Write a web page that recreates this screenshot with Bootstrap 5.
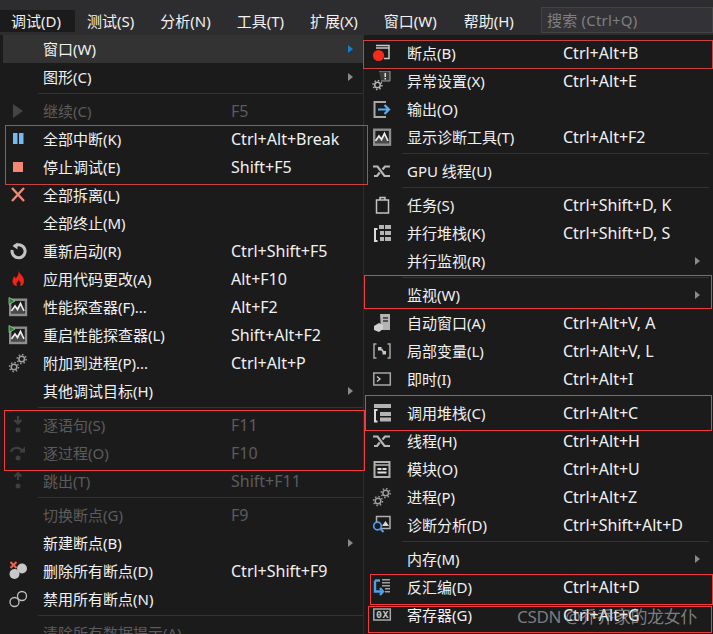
<!DOCTYPE html>
<html lang="zh">
<head>
<meta charset="utf-8">
<title>调试菜单</title>
<link href="https://cdn.jsdelivr.net/npm/bootstrap@5.3.0/dist/css/bootstrap.min.css" rel="stylesheet">
<style>
html,body{height:634px;overflow:hidden}
body{background:#1b1b1c;color:#f1f1f1;font:15px/20px "Noto Sans","Noto Sans CJK SC",sans-serif}
.vs-stage{width:713px;height:634px;overflow:hidden}
.vs-bar{height:35px;background:#2d2d30;padding-top:10px;font-size:15px}
.vs-tab{height:22px;line-height:22px;padding-left:11px;padding-right:14px;margin-right:1px;white-space:nowrap}
.vs-tab.on{background:#1b1b1c;width:75px}
.vs-tab.wide{padding-right:15px}
.vs-search{position:absolute;left:541px;top:7px;width:172px;height:26px;background:#333337;border:1px solid #434346;color:#7f7f7f;padding-left:5px;line-height:24px;letter-spacing:.2px}
.vs-body{height:599px}
.vs-left{width:364px;flex:none;padding-left:3px;border-right:1px solid #2d2d30}
.vs-right{flex:1;padding:4px 0 0 3px}
.vs-row{height:28px;white-space:nowrap}
.vs-row.hot{background:#333334}
.vs-row.off{color:#5c5c5c}
.vs-ico{flex:none;width:40px;height:20px;padding-left:5px}
.vs-ico svg{display:block}
.vs-lab{flex:none}
.vs-left .vs-lab{width:188px}
.vs-right .vs-lab{width:156px}
.vs-key{flex:1;font-size:16px}
.vs-arr{flex:none;width:0;height:0;border-style:solid;border-width:4px 0 4px 5px;border-color:transparent transparent transparent #8a8a8a}
.vs-left .vs-arr{margin-right:10px}
.vs-right .vs-arr{margin-right:13px}
.vs-arr.blue{border-left-color:#0e7fd6}
.vs-sep{height:6px;padding-top:2px}
.vs-sep i{display:block;height:1px;background:#333337}
.vs-left .vs-sep{margin-left:35px}
.vs-right .vs-sep{margin-left:35px;margin-right:4px}
.vs-mark{position:absolute;border:1px solid #f23b3b;pointer-events:none}
.vs-mark.dim{border-color:#c9443f}
.vs-wm{position:absolute;left:517px;top:606px;line-height:22px;font-size:17px;letter-spacing:-.3px;color:rgba(190,190,190,.62);white-space:nowrap}
</style>
</head>
<body>
<svg width="0" height="0" class="position-absolute">
<defs>
<symbol id="i-perf" viewBox="0 0 20 20"><path d="M3 17l4-7 2.500 3.500 3-6.500 4.500 10z" fill="#4a4a4a"/><rect x="2.200" y="2.700" width="15.800" height="15.300" fill="none" stroke="#8e8e8e" stroke-width="2.400"/><path d="M3.500 14l3.500-5 2.500 3.500 3-6 3.500 7.500" fill="none" stroke="#ececec" stroke-width="1.700"/><path d="M1 .5v7l6-3.500z" fill="#2f7f3f" stroke="#8fd08f" stroke-width=".8"/></symbol>
<symbol id="i-gears" viewBox="0 0 20 20"><g fill="none" stroke="#a0a0a0"><circle cx="13.700" cy="6" r="2.800" stroke-width="1.500"/><circle cx="13.700" cy="6" r="4.500" stroke-width="1.400" stroke-dasharray="1.500 2"/><circle cx="6" cy="14" r="2.800" stroke-width="1.500"/><circle cx="6" cy="14" r="4.500" stroke-width="1.400" stroke-dasharray="1.500 2"/></g></symbol>
<symbol id="i-thread" viewBox="0 0 20 20"><path d="M1 5.500h4.500l7 9.500h5.500M2 15h3l2.700-3.500M10.500 8.500L13 5.500h5" fill="none" stroke="#b8b8b8" stroke-width="2.200"/></symbol>
<symbol id="i-stack" viewBox="0 0 20 20"><path d="M2 1h17v4H2zM8 9h11v4H8zM8 14.500h11v4H8z" fill="#b4b4b4"/><path d="M5.500 7H3v11.500h2.500" fill="none" stroke="#dcdcdc" stroke-width="2"/></symbol>
</defs>
</svg>
<div class="vs-stage position-relative">
  <div class="vs-bar d-flex position-relative">
    <div class="vs-tab on">调试(D)</div>
    <div class="vs-tab">测试(S)</div>
    <div class="vs-tab">分析(N)</div>
    <div class="vs-tab">工具(T)</div>
    <div class="vs-tab">扩展(X)</div>
    <div class="vs-tab wide">窗口(W)</div>
    <div class="vs-tab">帮助(H)</div>
    <div class="vs-search">搜索 (Ctrl+Q)</div>
  </div>
  <div class="vs-body d-flex">
    <div class="vs-left">
      <div class="vs-row hot d-flex align-items-center"><div class="vs-ico"></div><div class="vs-lab flex-grow-1">窗口(W)</div><div class="vs-arr blue"></div></div>
      <div class="vs-row d-flex align-items-center"><div class="vs-ico"></div><div class="vs-lab flex-grow-1">图形(C)</div><div class="vs-arr"></div></div>
      <div class="vs-sep"><i></i></div>
      <div class="vs-row off d-flex align-items-center"><div class="vs-ico"><svg width="20" height="20"><path d="M5 3l10 7-10 7z" fill="#454545"/></svg></div><div class="vs-lab">继续(C)</div><div class="vs-key">F5</div></div>
      <div class="vs-row d-flex align-items-center"><div class="vs-ico"><svg width="20" height="20"><path d="M5 4h4.500v11H5zM11 4h4.500v11H11z" fill="#75b9f0"/></svg></div><div class="vs-lab">全部中断(K)</div><div class="vs-key">Ctrl+Alt+Break</div></div>
      <div class="vs-row d-flex align-items-center"><div class="vs-ico"><svg width="20" height="20"><path d="M5 5h10v10H5z" fill="#f48771"/></svg></div><div class="vs-lab">停止调试(E)</div><div class="vs-key">Shift+F5</div></div>
      <div class="vs-row d-flex align-items-center"><div class="vs-ico"><svg width="20" height="20"><path d="M4 3l12 13M16 3L4 16" stroke="#f48771" stroke-width="2.400" fill="none"/></svg></div><div class="vs-lab">全部拆离(L)</div></div>
      <div class="vs-row d-flex align-items-center"><div class="vs-ico"></div><div class="vs-lab">全部终止(M)</div></div>
      <div class="vs-row d-flex align-items-center"><div class="vs-ico"><svg width="20" height="20"><path d="M6.500 5.200A6.500 6.500 0 1 1 4.200 9" fill="none" stroke="#c4c4c4" stroke-width="3"/><path d="M9.500 1.500v7l-5-3.500z" fill="#c4c4c4"/></svg></div><div class="vs-lab">重新启动(R)</div><div class="vs-key">Ctrl+Shift+F5</div></div>
      <div class="vs-row d-flex align-items-center"><div class="vs-ico"><svg width="20" height="20"><path d="M10.500 2c1 3 5.500 5 5.500 10 0 3-2 5-4 5 1-2 1-4-1.500-6-.5 2-2 2-2 4 0 1 .5 2 .5 2-2 0-4.500-2-4.500-5 0-2 1-3 1.500-4.500 1 0 1.500 1 1.500 2C9.500 8 11 5 10.500 2z" fill="#f5221b"/></svg></div><div class="vs-lab">应用代码更改(A)</div><div class="vs-key">Alt+F10</div></div>
      <div class="vs-row d-flex align-items-center"><div class="vs-ico"><svg width="20" height="20"><use href="#i-perf"/></svg></div><div class="vs-lab">性能探查器(F)...</div><div class="vs-key">Alt+F2</div></div>
      <div class="vs-row d-flex align-items-center"><div class="vs-ico"><svg width="20" height="20"><use href="#i-perf"/></svg></div><div class="vs-lab">重启性能探查器(L)</div><div class="vs-key">Shift+Alt+F2</div></div>
      <div class="vs-row d-flex align-items-center"><div class="vs-ico"><svg width="20" height="20"><use href="#i-gears"/></svg></div><div class="vs-lab">附加到进程(P)...</div><div class="vs-key">Ctrl+Alt+P</div></div>
      <div class="vs-row d-flex align-items-center"><div class="vs-ico"></div><div class="vs-lab flex-grow-1">其他调试目标(H)</div><div class="vs-arr"></div></div>
      <div class="vs-sep"><i></i></div>
      <div class="vs-row off d-flex align-items-center"><div class="vs-ico"><svg width="20" height="20"><path d="M10 1v7M6.500 5l3.500 3.500L13.500 5" fill="none" stroke="#3f3f3f" stroke-width="2.200"/><circle cx="10" cy="15" r="2.500" fill="#3f3f3f"/></svg></div><div class="vs-lab">逐语句(S)</div><div class="vs-key">F11</div></div>
      <div class="vs-row off d-flex align-items-center"><div class="vs-ico"><svg width="20" height="20"><path d="M3 9c1-5 9-6 12 0" fill="none" stroke="#3f3f3f" stroke-width="2.200"/><path d="M17 3.500v6h-6z" fill="#3f3f3f"/><circle cx="10" cy="15" r="2.500" fill="#3f3f3f"/></svg></div><div class="vs-lab">逐过程(O)</div><div class="vs-key">F10</div></div>
      <div class="vs-row off d-flex align-items-center"><div class="vs-ico"><svg width="20" height="20"><path d="M10 9V2M6.500 5.500L10 2l3.500 3.500" fill="none" stroke="#3f3f3f" stroke-width="2.200"/><circle cx="10" cy="15" r="2.500" fill="#3f3f3f"/></svg></div><div class="vs-lab">跳出(T)</div><div class="vs-key">Shift+F11</div></div>
      <div class="vs-sep"><i></i></div>
      <div class="vs-row off d-flex align-items-center"><div class="vs-ico"></div><div class="vs-lab">切换断点(G)</div><div class="vs-key">F9</div></div>
      <div class="vs-row d-flex align-items-center"><div class="vs-ico"></div><div class="vs-lab flex-grow-1">新建断点(B)</div><div class="vs-arr"></div></div>
      <div class="vs-row d-flex align-items-center"><div class="vs-ico"><svg width="20" height="20"><circle cx="14" cy="7.500" r="5" fill="#c8c8c8"/><circle cx="6.500" cy="13" r="5" fill="#c8c8c8"/><path d="M2.500 1l6 6M8.500 1l-6 6" stroke="#f0644f" stroke-width="2"/></svg></div><div class="vs-lab">删除所有断点(D)</div><div class="vs-key">Ctrl+Shift+F9</div></div>
      <div class="vs-row d-flex align-items-center"><div class="vs-ico"><svg width="20" height="20"><circle cx="14" cy="7" r="4.500" fill="none" stroke="#c0c0c0" stroke-width="1.300"/><circle cx="6.500" cy="13" r="4.500" fill="none" stroke="#c0c0c0" stroke-width="1.300"/></svg></div><div class="vs-lab">禁用所有断点(N)</div></div>
      <div class="vs-sep"><i></i></div>
      <div class="vs-row off d-flex align-items-center"><div class="vs-ico"></div><div class="vs-lab">清除所有数据提示(A)</div></div>
    </div>
    <div class="vs-right">
      <div class="vs-row d-flex align-items-center"><div class="vs-ico"><svg width="20" height="20"><path d="M4 2.500h13v13h-5M4 5h13" fill="none" stroke="#c8c8c8" stroke-width="1.500"/><circle cx="6.500" cy="12.500" r="5.600" fill="#f52b1c"/></svg></div><div class="vs-lab">断点(B)</div><div class="vs-key">Ctrl+Alt+B</div></div>
      <div class="vs-row d-flex align-items-center"><div class="vs-ico"><svg width="20" height="20"><path d="M7 0h11v10H9" fill="#3c3c3c" stroke="#9a9a9a"/><path d="M12.500 2h1.500v4h-1.500zM12.500 7h1.500v1.500h-1.500z" fill="#e0e0e0"/><circle cx="5.500" cy="14" r="2.800" fill="none" stroke="#b8b8b8" stroke-width="1.500"/><circle cx="5.500" cy="14" r="4.500" fill="none" stroke="#b8b8b8" stroke-width="1.400" stroke-dasharray="1.500 2"/></svg></div><div class="vs-lab">异常设置(X)</div><div class="vs-key">Ctrl+Alt+E</div></div>
      <div class="vs-row d-flex align-items-center"><div class="vs-ico"><svg width="20" height="20"><path d="M14 3H2.500v15H14" fill="none" stroke="#a8a8a8" stroke-width="2"/><path d="M6 10.500h11M12.500 6l4.500 4.500-4.500 4.500" fill="none" stroke="#5cadf2" stroke-width="2.200"/></svg></div><div class="vs-lab">输出(O)</div></div>
      <div class="vs-row d-flex align-items-center"><div class="vs-ico"><svg width="20" height="20"><path d="M3 17l4-7 2.500 3.500 3-6.500 4.500 10z" fill="#4a4a4a"/><rect x="2.200" y="2.700" width="15.800" height="15" fill="none" stroke="#8e8e8e" stroke-width="2.400"/><path d="M3.500 14l3.500-5 2.500 3.500 3-6 3.500 7.500" fill="none" stroke="#ececec" stroke-width="1.700"/></svg></div><div class="vs-lab">显示诊断工具(T)</div><div class="vs-key">Ctrl+Alt+F2</div></div>
      <div class="vs-sep"><i></i></div>
      <div class="vs-row d-flex align-items-center"><div class="vs-ico"><svg width="20" height="20"><use href="#i-thread"/></svg></div><div class="vs-lab">GPU 线程(U)</div></div>
      <div class="vs-sep"><i></i></div>
      <div class="vs-row d-flex align-items-center"><div class="vs-ico"><svg width="20" height="20"><path d="M4.500 5h12v13h-12zM8 5V2.500h5V5" fill="none" stroke="#c4c4c4" stroke-width="1.500"/></svg></div><div class="vs-lab">任务(S)</div><div class="vs-key">Ctrl+Shift+D, K</div></div>
      <div class="vs-row d-flex align-items-center"><div class="vs-ico"><svg width="20" height="20"><path d="M7 2h5v4H7zM13 2h6v4h-6zM8 8h4v4H8zM13 8h6v4h-6zM8 14h4v4H8zM13 14h6v4h-6z" fill="#b4b4b4"/><path d="M5.500 6H3v12h2.500" fill="none" stroke="#dcdcdc" stroke-width="2"/></svg></div><div class="vs-lab">并行堆栈(K)</div><div class="vs-key">Ctrl+Shift+D, S</div></div>
      <div class="vs-row d-flex align-items-center"><div class="vs-ico"></div><div class="vs-lab flex-grow-1">并行监视(R)</div><div class="vs-arr"></div></div>
      <div class="vs-sep"><i></i></div>
      <div class="vs-row d-flex align-items-center"><div class="vs-ico"></div><div class="vs-lab flex-grow-1">监视(W)</div><div class="vs-arr"></div></div>
      <div class="vs-row d-flex align-items-center"><div class="vs-ico"><svg width="20" height="20"><path d="M8 1h10v16H9z" fill="#b4b4b4"/><path d="M11 5h5M11 8h5" stroke="#333" stroke-width="1.300"/><path d="M2 13l5-3 4 2v4l-4 3-5-2z" fill="#d0d0d0"/></svg></div><div class="vs-lab">自动窗口(A)</div><div class="vs-key">Ctrl+Alt+V, A</div></div>
      <div class="vs-row d-flex align-items-center"><div class="vs-ico"><svg width="20" height="20"><path d="M4.500 3H2v14h2.500M15.500 3H18v14h-2.500" fill="none" stroke="#a8a8a8" stroke-width="1.500"/><path d="M6 6h3.500v3.500H6zM10.500 10h3.500v3.500h-3.500z" fill="#c8c8c8"/><path d="M9.500 8l1.500 2.500" stroke="#c8c8c8" stroke-width="1.500"/></svg></div><div class="vs-lab">局部变量(L)</div><div class="vs-key">Ctrl+Alt+V, L</div></div>
      <div class="vs-row d-flex align-items-center"><div class="vs-ico"><svg width="20" height="20"><rect x="1.800" y="4" width="16.500" height="12" fill="none" stroke="#a8a8a8" stroke-width="1.500"/><path d="M5 7.500l3 2.500-3 2.500" fill="none" stroke="#d0d0d0" stroke-width="1.300"/></svg></div><div class="vs-lab">即时(I)</div><div class="vs-key">Ctrl+Alt+I</div></div>
      <div class="vs-sep"><i></i></div>
      <div class="vs-row d-flex align-items-center"><div class="vs-ico"><svg width="20" height="20"><use href="#i-stack"/></svg></div><div class="vs-lab">调用堆栈(C)</div><div class="vs-key">Ctrl+Alt+C</div></div>
      <div class="vs-row d-flex align-items-center"><div class="vs-ico"><svg width="20" height="20"><use href="#i-thread"/></svg></div><div class="vs-lab">线程(H)</div><div class="vs-key">Ctrl+Alt+H</div></div>
      <div class="vs-row d-flex align-items-center"><div class="vs-ico"><svg width="20" height="20"><rect x="2.500" y="3" width="15" height="15" fill="none" stroke="#b0b0b0" stroke-width="2"/><path d="M3 6h14" stroke="#b0b0b0" stroke-width="1.500"/><path d="M5.500 9h4v2h-4zM10.500 9h4v2h-4zM5.500 12.500h9v2h-9z" fill="#e0e0e0"/></svg></div><div class="vs-lab">模块(O)</div><div class="vs-key">Ctrl+Alt+U</div></div>
      <div class="vs-row d-flex align-items-center"><div class="vs-ico"><svg width="20" height="20"><use href="#i-gears"/></svg></div><div class="vs-lab">进程(P)</div><div class="vs-key">Ctrl+Alt+Z</div></div>
      <div class="vs-row d-flex align-items-center"><div class="vs-ico"><svg width="20" height="20"><rect x="4.500" y="1.500" width="13.500" height="12" fill="none" stroke="#b0b0b0" stroke-width="1.500"/><path d="M10 11l3.500-5 3.500 5z" fill="#d8d8d8"/><circle cx="5.500" cy="11" r="3.800" fill="#1b1b1c" stroke="#4f9fe8" stroke-width="1.700"/><path d="M8.500 14l3 3" stroke="#4f9fe8" stroke-width="2"/></svg></div><div class="vs-lab">诊断分析(D)</div><div class="vs-key">Ctrl+Shift+Alt+D</div></div>
      <div class="vs-sep"><i></i></div>
      <div class="vs-row d-flex align-items-center"><div class="vs-ico"></div><div class="vs-lab flex-grow-1">内存(M)</div><div class="vs-arr"></div></div>
      <div class="vs-row d-flex align-items-center"><div class="vs-ico"><svg width="20" height="20"><path d="M3 3.500h5M3 3.500v11h7M8 11l3 3.500L8 18" fill="none" stroke="#4f9fe8" stroke-width="2.400"/><path d="M10 2h8v1.500h-8zM10 5h8v1.500h-8zM10 8h8v1.500h-8zM13 11h5v1.500h-5zM13 14h5v1.500h-5z" fill="#a0a0a0"/></svg></div><div class="vs-lab">反汇编(D)</div><div class="vs-key">Ctrl+Alt+D</div></div>
      <div class="vs-row d-flex align-items-center"><div class="vs-ico"><svg width="20" height="20"><rect x="1.800" y="4" width="16.500" height="11" fill="none" stroke="#a8a8a8" stroke-width="1.500"/><text x="4" y="13" font-family="Liberation Mono" font-size="10" font-weight="700" letter-spacing=".6" fill="#c8c8c8">0X</text></svg></div><div class="vs-lab">寄存器(G)</div><div class="vs-key">Ctrl+Alt+G</div></div>
    </div>
  </div>
  <div class="vs-mark dim" style="left:5px;top:125px;width:363px;height:60px"></div>
  <div class="vs-mark dim" style="left:363px;top:40px;width:350px;height:29px"></div>
  <div class="vs-mark" style="left:4px;top:410px;width:361px;height:61px"></div>
  <div class="vs-mark" style="left:364px;top:275px;width:348px;height:34px"></div>
  <div class="vs-mark" style="left:365px;top:395px;width:347px;height:36px"></div>
  <div class="vs-mark" style="left:370px;top:574px;width:343px;height:31px"></div>
  <div class="vs-mark" style="left:368px;top:606px;width:344px;height:27px"></div>
  <div class="vs-wm">CSDN @乔乔家的龙女仆</div>
</div>
</body>
</html>
